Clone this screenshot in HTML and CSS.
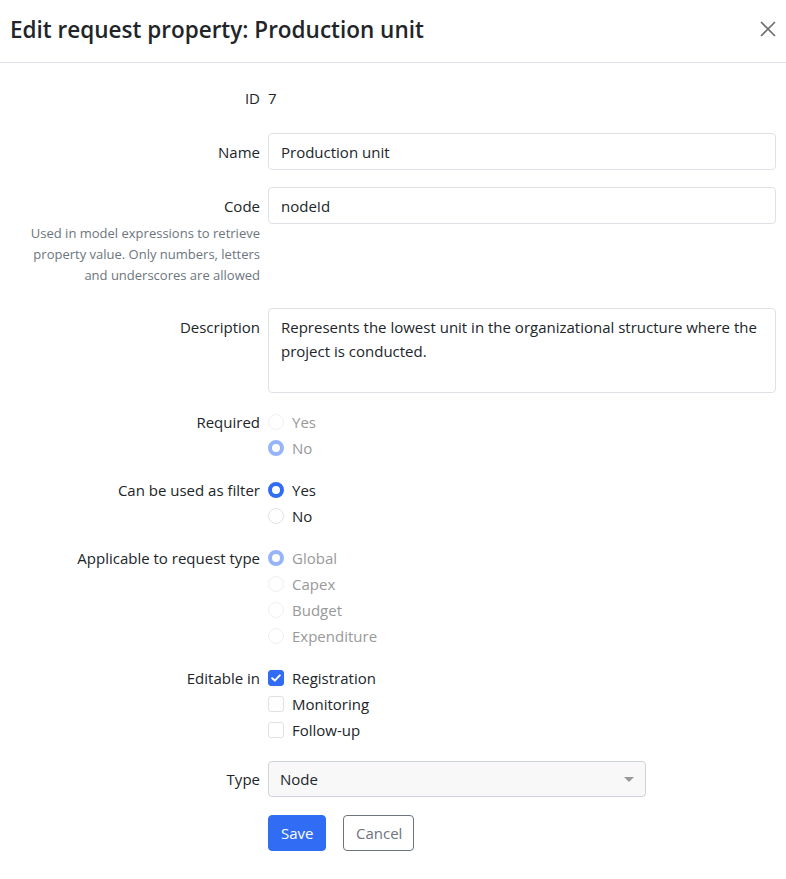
FILE: index.html
```html
<!DOCTYPE html>
<html lang="en">
<head>
<meta charset="utf-8">
<title>Edit request property</title>
<link rel="stylesheet" href="styles.css">
</head>
<body>
<div class="modal">
  <div class="modal-header">
    <h1 class="title">Edit request property: Production unit</h1>
    <button class="close" aria-label="Close">
      <svg width="16" height="16" viewBox="0 0 16 16"><path d="M1 1L15 15M15 1L1 15" stroke="#6f6f6f" stroke-width="1.7" fill="none"/></svg>
    </button>
  </div>
  <div class="modal-body">
    <div class="row">
      <div class="label">ID</div>
      <div class="static">7</div>
    </div>
    <div class="row">
      <div class="label">Name</div>
      <div><input class="input" type="text" value="Production unit"></div>
    </div>
    <div class="row">
      <div class="label-wrap">
        <div class="label">Code</div>
        <div class="help">Used in model expressions to retrieve property value. Only numbers, letters and underscores are allowed</div>
      </div>
      <div><input class="input" type="text" value="nodeId"></div>
    </div>
    <div class="row row-tight">
      <div class="label">Description</div>
      <div><textarea class="textarea">Represents the lowest unit in the organizational structure where the project is conducted.</textarea></div>
    </div>
    <div class="row row-tight">
      <div class="label label-opt">Required</div>
      <div class="options">
        <label class="opt disabled"><span class="radio"></span>Yes</label>
        <label class="opt disabled"><span class="radio checked"></span>No</label>
      </div>
    </div>
    <div class="row row-tight">
      <div class="label label-opt">Can be used as filter</div>
      <div class="options">
        <label class="opt"><span class="radio checked"></span>Yes</label>
        <label class="opt"><span class="radio"></span>No</label>
      </div>
    </div>
    <div class="row row-tight">
      <div class="label label-opt">Applicable to request type</div>
      <div class="options">
        <label class="opt disabled"><span class="radio checked"></span>Global</label>
        <label class="opt disabled"><span class="radio"></span>Capex</label>
        <label class="opt disabled"><span class="radio"></span>Budget</label>
        <label class="opt disabled"><span class="radio"></span>Expenditure</label>
      </div>
    </div>
    <div class="row row-wide">
      <div class="label label-opt">Editable in</div>
      <div class="options">
        <label class="opt"><span class="check checked"><svg width="10" height="8" viewBox="0 0 10 8"><path d="M1.2 4.2L3.8 6.6L8.8 1.4" stroke="#fff" stroke-width="2" fill="none" stroke-linecap="round" stroke-linejoin="round"/></svg></span>Registration</label>
        <label class="opt"><span class="check"></span>Monitoring</label>
        <label class="opt"><span class="check"></span>Follow-up</label>
      </div>
    </div>
    <div class="row row-wide">
      <div class="label label-select">Type</div>
      <div class="select">
        <span>Node</span>
        <span class="caret"></span>
      </div>
    </div>
    <div class="row">
      <div></div>
      <div class="actions">
        <button class="btn btn-primary">Save</button>
        <button class="btn btn-outline">Cancel</button>
      </div>
    </div>
  </div>
</div>
</body>
</html>
```
FILE: styles.css
```css
* { box-sizing: border-box; }
html, body { margin: 0; padding: 0; background: #fff; }
body {
  font-family: "Open Sans", "Noto Sans", sans-serif;
  font-size: 15px;
  color: #212529;
  line-height: 24px;
}
.modal { width: 786px; }
.modal-header {
  height: 63px;
  border-bottom: 1px solid #dee2e6;
  display: flex;
  align-items: center;
  justify-content: space-between;
  padding: 0 10px 3px 10px;
}
.title {
  margin: 0;
  font-size: 22.5px;
  font-weight: 600;
  line-height: 30px;
  color: #212529;
}
.close {
  border: 0;
  background: none;
  padding: 0;
  width: 16px;
  height: 16px;
  display: flex;
  margin-top: -1px;
}
.modal-body { padding: 16px 10px 20px 10px; }
.row {
  display: grid;
  grid-template-columns: 250px 1fr;
  column-gap: 8px;
  margin-bottom: 17px;
}
.row-tight { margin-bottom: 16px; }
.row-wide { margin-bottom: 18px; }
.label {
  text-align: right;
  padding: 6.5px 0;
}
.label-opt { padding: 1px 0; line-height: 24px; }
.label-select { padding: 6px 0; }
.static { padding: 6.5px 0; }
.help {
  text-align: right;
  font-size: 13px;
  line-height: 21px;
  color: #6c757d;
  margin: -1px 0 5px 0;
}
.input, .textarea {
  display: block;
  width: 100%;
  font: inherit;
  color: #212529;
  border: 1px solid #dee2e6;
  border-radius: 4px;
  background: #fff;
  padding: 5.5px 12px;
  line-height: 24px;
  outline: none;
}
.textarea {
  height: 85px;
  resize: none;
  padding: 6px 12px;
  overflow: hidden;
}
.options { display: flex; flex-direction: column; }
.opt {
  display: flex;
  align-items: center;
  height: 26px;
  gap: 8px;
  color: #212529;
}
.opt.disabled { color: #999; }
.opt.disabled .radio { opacity: 0.5; }
.radio {
  width: 16px;
  height: 16px;
  border-radius: 50%;
  border: 1px solid #dee2e6;
  background: #fff;
  flex: none;
}
.radio.checked {
  border: 4.5px solid #316cf4;
  background: #fff;
}
.check {
  width: 16px;
  height: 16px;
  border-radius: 3px;
  border: 1px solid #dee2e6;
  background: #fff;
  flex: none;
  display: flex;
  align-items: center;
  justify-content: center;
}
.check.checked { background: #316cf4; border-color: #316cf4; }
.select {
  width: 378px;
  height: 36px;
  border: 1px solid #ced4da;
  border-radius: 4px;
  background: #f8f8f8;
  display: flex;
  align-items: center;
  justify-content: space-between;
  padding: 0 11px 0 11px;
}
.caret {
  width: 0;
  height: 0;
  border-left: 5px solid transparent;
  border-right: 5px solid transparent;
  border-top: 5px solid #999;
}
.actions { display: flex; gap: 17px; }
.btn {
  height: 36px;
  font: inherit;
  border-radius: 4px;
  padding: 0 12px;
  cursor: pointer;
}
.btn-primary { background: #316cf4; color: #fff; border: 1px solid #316cf4; width: 58px; }
.btn-outline { background: #fff; color: #6c757d; border: 1px solid #6c757d; width: 71px; }
```
